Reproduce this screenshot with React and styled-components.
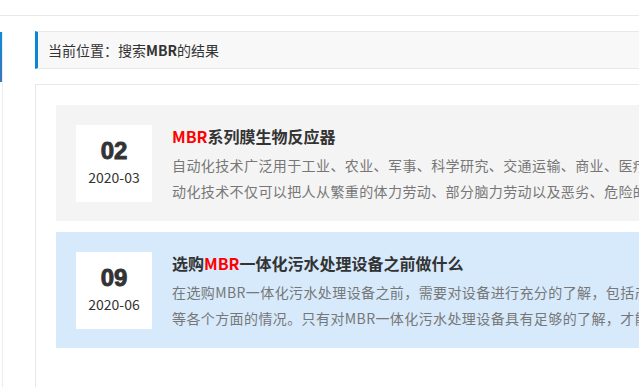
import React from 'react';
import styled, {createGlobalStyle} from 'styled-components';

const GlobalStyle = createGlobalStyle`
  html, body {
    margin: 0;
    padding: 0;
    background: #fff;
    overflow: hidden;
  }
  body {
    font-family: "Microsoft YaHei", "Noto Sans CJK SC", "Noto Sans", sans-serif;
    color: #333;
  }
`

const Header = styled.div`
  height: 15px;
  border-bottom: 1px solid #e8e8e8;
`

const Page = styled.div`
  display: flex;
  align-items: flex-start;
  gap: 32px;
  padding-top: 15px;
`

const Sidebar = styled.aside`
  flex: 0 0 auto;
  width: 238px;
  margin-left: -236px;
  margin-top: 1px;
  height: 400px;
  border-right: 1px solid #ececec;
`

const SideHead = styled.div`
  height: 50px;
  background: linear-gradient(180deg, #0c8ad8 0%, #3f74ba 100%);
`

const Main = styled.main`
  flex: 0 0 auto;
  width: 842px;
`

const Crumb = styled.div`
  display: flex;
  align-items: center;
  height: 36px;
  padding-left: 10px;
  background: #f8f8f8;
  border: 1px solid #e8e8e8;
  border-left: 3px solid #0a86d5;
  font-size: 14px;
  color: #333;

  b {
    font-weight: bold;
  }
`

const ListBox = styled.div`
  margin-top: 15px;
  border: 1px solid #e8e8e8;
  padding: 20px 20px 40px;
  min-height: 300px;
`

const Item = styled.div`
  display: flex;
  align-items: flex-start;
  gap: 20px;
  padding: 20px 20px 17px;
  height: 79px;
  background: ${props => props.active ? '#d6eafc' : '#f4f4f4'};
  margin-bottom: 11px;
`

const DateBox = styled.div`
  flex: 0 0 76px;
  height: 77px;
  background: #fff;
  display: flex;
  flex-direction: column;
  align-items: center;
  box-sizing: border-box;
  padding-top: 14px;
`

const Day = styled.div`
  font-family: Impact, "Liberation Sans Narrow", "Liberation Sans", sans-serif;
  font-weight: bold;
  font-size: 24px;
  line-height: 24px;
  color: #333;
  -webkit-text-stroke: 0.9px #333;
`

const Month = styled.div`
  margin-top: 5px;
  font-size: 14px;
  line-height: 18px;
  color: #333;
`

const Text = styled.div`
  flex: 1;
  min-width: 0;
`

const Title = styled.h3`
  margin: 0;
  font-size: 16px;
  line-height: 22px;
  font-weight: bold;
  color: #333;
  white-space: nowrap;

  em {
    font-style: normal;
    color: #f00;
  }
`

const Desc = styled.p`
  margin: 5px 0 0;
  font-size: 14px;
  line-height: 26px;
  letter-spacing: 0.4px;
  color: #777;
  display: -webkit-box;
  -webkit-line-clamp: 2;
  -webkit-box-orient: vertical;
  overflow: hidden;
`

const results = [
    {
        day: '02',
        month: '2020-03',
        before: '',
        after: '系列膜生物反应器',
        desc: '自动化技术广泛用于工业、农业、军事、科学研究、交通运输、商业、医疗、服务和家庭等方面。采用自动化技术不仅可以把人从繁重的体力劳动、部分脑力劳动以及恶劣、危险的工作环境中解放出来，而且能扩展人的器官功能，极大地提高劳动生产率。',
    },
    {
        day: '09',
        month: '2020-06',
        before: '选购',
        after: '一体化污水处理设备之前做什么',
        desc: '在选购MBR一体化污水处理设备之前，需要对设备进行充分的了解，包括产品的质量、价格、售后服务等各个方面的情况。只有对MBR一体化污水处理设备具有足够的了解，才能选购到合适的设备。',
        active: true,
    },
];

const App = () => {
    return (
        <>
            <GlobalStyle/>
            <Header/>
            <Page>
                <Sidebar>
                    <SideHead/>
                </Sidebar>
                <Main>
                    <Crumb>当前位置：搜索<b>MBR</b>的结果</Crumb>
                    <ListBox>
                        {results.map(item => (
                            <Item key={item.day} active={item.active}>
                                <DateBox>
                                    <Day>{item.day}</Day>
                                    <Month>{item.month}</Month>
                                </DateBox>
                                <Text>
                                    <Title>{item.before}<em>MBR</em>{item.after}</Title>
                                    <Desc>{item.desc}</Desc>
                                </Text>
                            </Item>
                        ))}
                    </ListBox>
                </Main>
            </Page>
        </>
    );
};

export default App;
